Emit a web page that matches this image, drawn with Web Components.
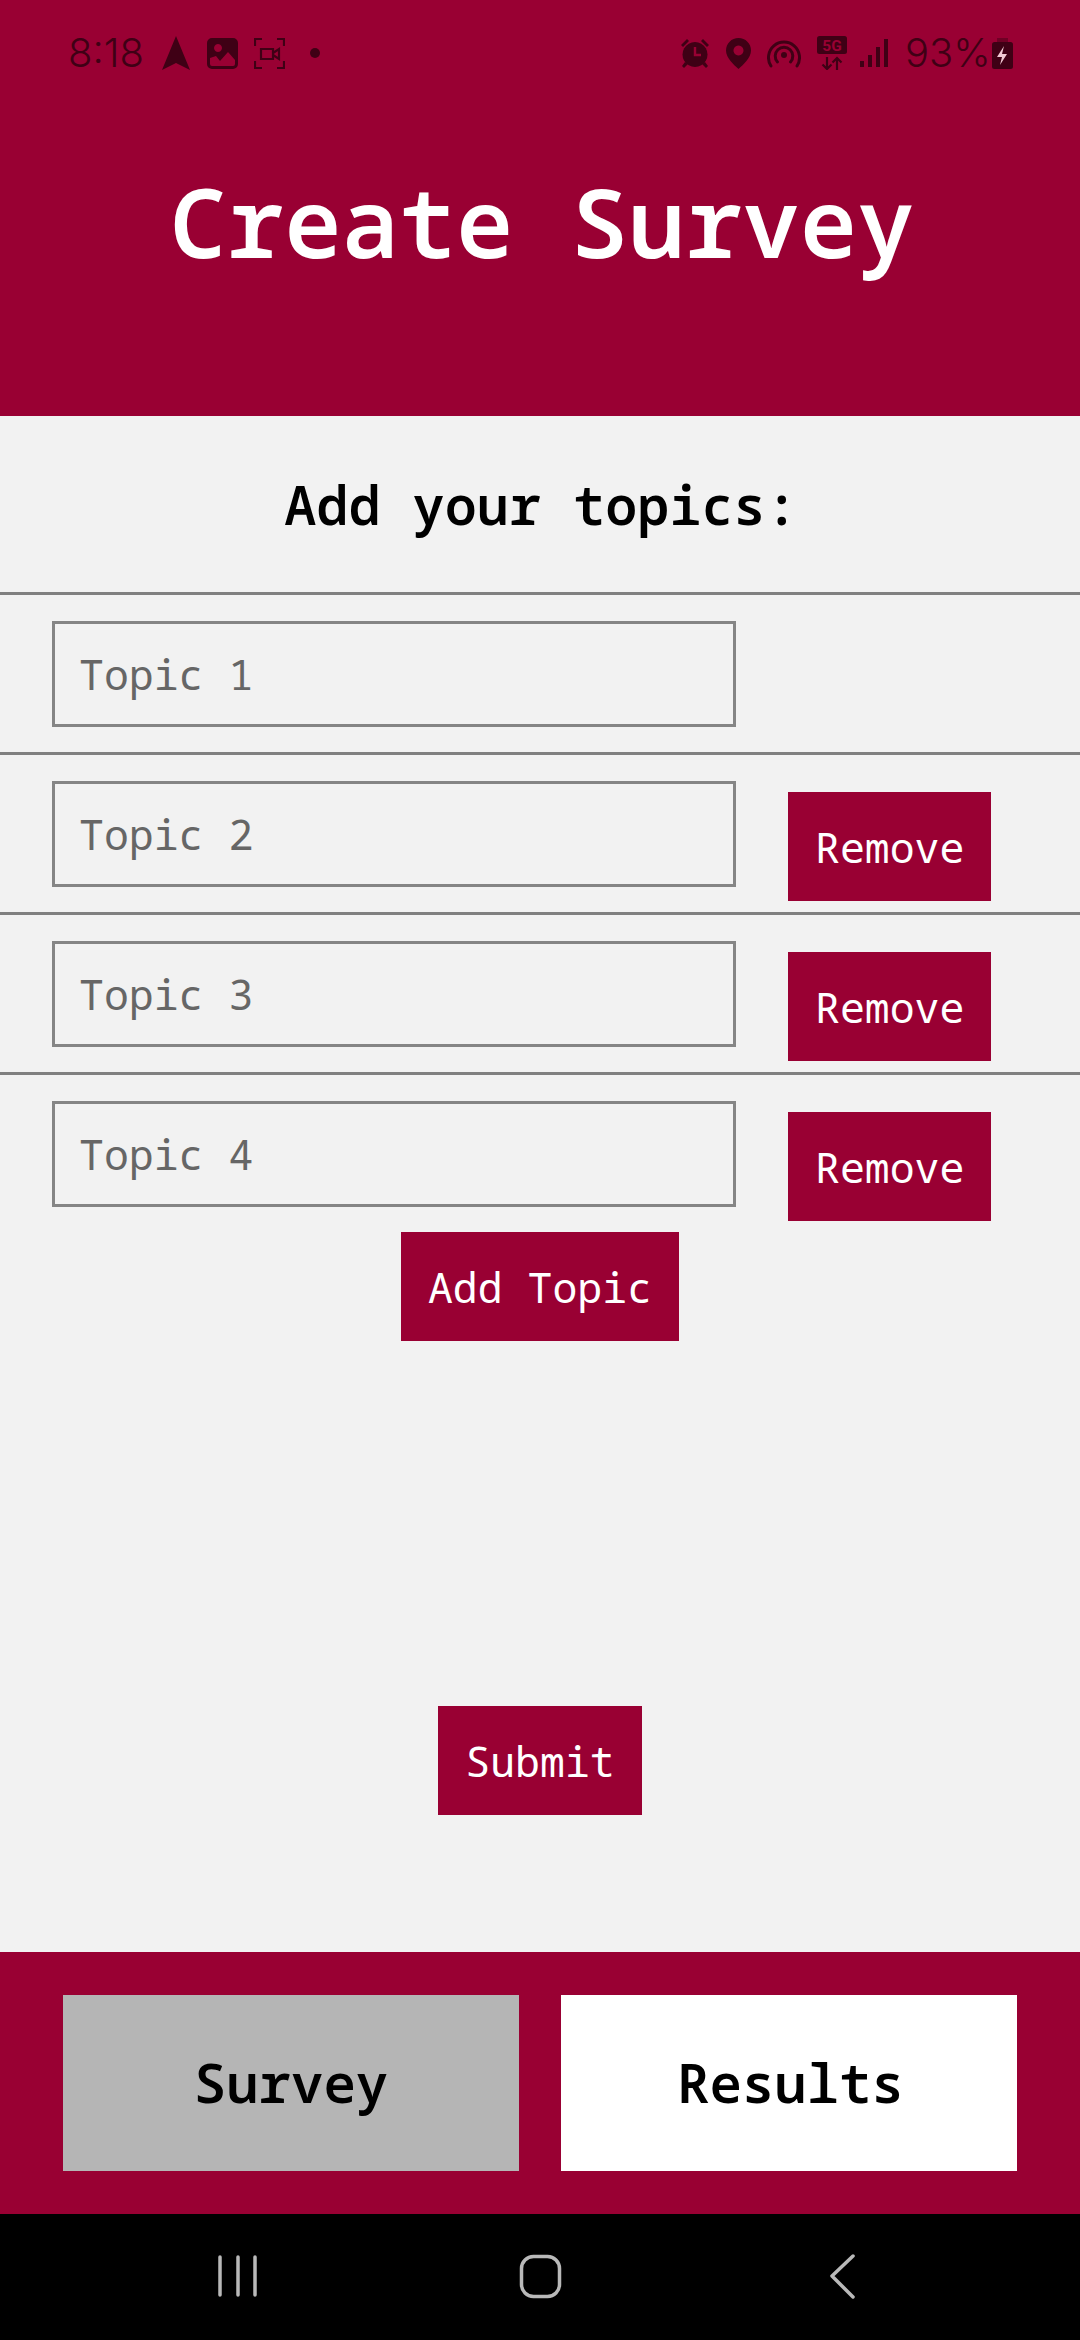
<!DOCTYPE html>
<html><head><meta charset="utf-8"><title>Create Survey</title>
<style>
html,body{margin:0;padding:0;height:2340px;width:1080px;overflow:hidden}
body{display:flex;flex-direction:column;background:#f2f2f2;font-family:"Noto Sans Mono","DejaVu Sans Mono",monospace}
x-main{flex:1}
</style></head><body>
<x-header></x-header>
<x-main></x-main>
<x-tabs></x-tabs>
<x-nav></x-nav>
<script>
const MONO='"Noto Sans Mono","DejaVu Sans Mono",monospace';
class Base extends HTMLElement{
  render(h){this.attachShadow({mode:'open'}).innerHTML=h}
}
class XStatus extends Base{connectedCallback(){this.render(`<style>
:host{display:flex;align-items:center;height:106px;box-sizing:border-box;padding:0 0 0 68px;color:#3f0015;font:300 40px Inter,Roboto,sans-serif}
svg{display:block;flex:none;fill:#3f0015}
.t{width:74px;line-height:1;white-space:nowrap}
.sp{flex:1}
.pct{width:82px;line-height:1;white-space:nowrap}
</style>
<span class="t">8:18</span>
<svg style="margin-left:20px" width="28" height="34" viewBox="0 0 28 34"><path d="M14 0 28 34 14 27 0 34Z"/></svg>
<svg style="margin-left:17px" width="31" height="31" viewBox="0 0 31 31"><path fill-rule="evenodd" d="M5 0H26a5 5 0 0 1 5 5V26a5 5 0 0 1-5 5H5a5 5 0 0 1-5-5V5a5 5 0 0 1 5-5ZM3 20V26a2 2 0 0 0 2 2H26a2 2 0 0 0 2-2V22L21 14 13 23 9 18ZM11 6a4 4 0 1 0 .01 0Z"/></svg>
<svg style="margin-left:16px" width="31" height="31" viewBox="0 0 31 31"><path fill="none" stroke="#3f0015" stroke-width="2.2" d="M1 8V1H8M23 1H30V8M1 23V30H8M23 30H30V23"/><path fill="none" stroke="#3f0015" stroke-width="2.2" d="M7 11H19V21H7ZM19 15 25 11V21L19 17"/></svg>
<svg style="margin-left:25px" width="10" height="10" viewBox="0 0 10 10"><circle cx="5" cy="5" r="5"/></svg>
<span class="sp"></span>
<svg width="30" height="30" viewBox="0 0 30 30"><path d="M15 4a12.500 12.500 0 1 0 .01 0Z"/><path d="M1 7 7 1l2 2-6 6ZM29 7 23 1l-2 2 6 6ZM5 24 2 28l2 2 4-4ZM25 24l3 4-2 2-4-4Z"/><path fill="none" stroke="#990033" stroke-width="2.400" d="M15 9V17H21"/></svg>
<svg style="margin-left:16px" width="25" height="31" viewBox="0 0 25 31"><path fill-rule="evenodd" d="M12.500 0C5.500 0 0 5.500 0 12.500 0 20 8 27 12.500 31 17 27 25 20 25 12.500 25 5.500 19.500 0 12.500 0ZM12.500 7.500a5 5 0 1 1-.01 0Z"/></svg>
<svg style="margin-left:16px" width="34" height="30" viewBox="0 0 34 30"><g fill="none" stroke="#3f0015" stroke-width="3" stroke-linecap="round"><path d="M4 28A15.500 15.500 0 1 1 30 28"/><path d="M10.500 24A8.800 8.800 0 1 1 23.500 24"/></g><circle cx="17" cy="17" r="3"/></svg>
<svg style="margin-left:16px" width="30" height="34" viewBox="0 0 30 34"><rect width="30" height="18" rx="2.500"/><text x="15" y="15" text-anchor="middle" font-family="Roboto,sans-serif" font-weight="700" font-size="15.500" fill="#990033">5G</text><path fill="none" stroke="#3f0015" stroke-width="2.200" d="M10 21V33M5.500 28.500 10 33 14.500 28.500M20 34V22M15.500 26.500 20 22 24.500 26.500"/></svg>
<svg style="margin-left:13px" width="28" height="30" viewBox="0 0 28 30"><path d="M0 23h4v6H0ZM8 17h4v12H8ZM16 9h4v20h-4ZM24 1h4v28h-4Z"/></svg>
<span class="pct" style="margin-left:17px">93%</span>
<svg style="margin-left:5px;margin-right:67px" width="21" height="31" viewBox="0 0 21 31"><rect x="5" width="11" height="4" opacity=".45"/><rect y="4" width="21" height="27" rx="2.500"/><path fill="#f1c9d4" d="M12 8 5 19h5l-2 8 7-11h-5Z"/></svg>`)}}
class XHeader extends Base{connectedCallback(){this.render(`<style>
:host{display:block;height:416px;background:#990033}
h1{margin:0;text-align:center;color:#fff;font:600 95.500px/130px ${MONO};padding:50px 0 0 4px}
</style><x-status></x-status><h1>Create Survey</h1>`)}}
class XBtn extends Base{connectedCallback(){this.render(`<style>
:host{display:inline-flex;align-items:center;justify-content:center;height:109px;padding:0 27px;background:#990033;color:#fff;font:400 41.500px ${MONO};flex:none}
</style><slot></slot>`)}}
class XRow extends Base{connectedCallback(){const rm=this.hasAttribute('removable');this.render(`<style>
:host{display:flex;box-sizing:border-box;height:160px;border-top:3px solid #808080;padding:26px 0 0 52px;font-family:${MONO}}
.i{box-sizing:border-box;width:684px;height:106px;border:3px solid #858585;display:flex;align-items:center;padding-left:24px;color:#666;font-size:41.500px}
x-btn{margin:11px 0 0 52px}
</style><div class="i">${this.getAttribute('label')}</div>${rm?'<x-btn>Remove</x-btn>':''}`)}}
class XMain extends Base{connectedCallback(){this.render(`<style>
:host{display:flex;flex-direction:column;align-items:stretch;flex:1;background:#f2f2f2}
h2{margin:0;height:176px;box-sizing:border-box;padding-left:2px;display:flex;align-items:center;justify-content:center;font:600 53.500px ${MONO};color:#000}
.c{display:flex;justify-content:center}
.s{margin-top:365px}
</style>
<h2>Add your topics:</h2>
<x-row label="Topic 1"></x-row>
<x-row label="Topic 2" removable></x-row>
<x-row label="Topic 3" removable></x-row>
<x-row label="Topic 4" removable></x-row>
<div class="c"><x-btn>Add Topic</x-btn></div>
<div class="c s"><x-btn>Submit</x-btn></div>`)}}
class XTabs extends Base{connectedCallback(){this.render(`<style>
:host{display:flex;height:262px;box-sizing:border-box;background:#990033;padding:43px 63px 0;gap:42px}
div{width:456px;height:176px;box-sizing:border-box;padding-bottom:2px;display:flex;align-items:center;justify-content:center;font:600 54px ${MONO};color:#000}
.a{background:#b5b5b5}.b{background:#fff;padding-left:3px}
</style><div class="a">Survey</div><div class="b">Results</div>`)}}
class XNav extends Base{connectedCallback(){this.render(`<style>
:host{display:block;height:126px;background:#000}
svg{display:block}
</style><svg width="1080" height="126" viewBox="0 0 1080 126"><g fill="none" stroke="#b9b9b9" stroke-width="3.500" stroke-linecap="round" stroke-linejoin="round"><path d="M220 43V81M238 43V81M255 43V81"/><rect x="521.500" y="42.500" width="38" height="40" rx="12" stroke-width="3.500"/><path d="M853 42 832 62 853 83" stroke-width="3.500"/></g></svg>`)}}
customElements.define('x-status',XStatus);
customElements.define('x-btn',XBtn);
customElements.define('x-row',XRow);
customElements.define('x-header',XHeader);
customElements.define('x-main',XMain);
customElements.define('x-tabs',XTabs);
customElements.define('x-nav',XNav);
</script>
</body></html>
